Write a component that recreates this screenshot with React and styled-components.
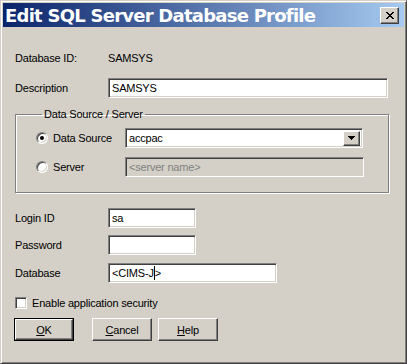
import { createGlobalStyle, styled } from "styled-components";

const GlobalStyle = createGlobalStyle`
  html, body {
    margin: 0;
    padding: 0;
    background: #d4d0c8;
  }
  * {
    box-sizing: border-box;
  }
`;

const Window = styled.div`
  width: 407px;
  height: 364px;
  background: #d4d0c8;
  border: 1px solid;
  border-color: #d4d0c8 #404040 #404040 #d4d0c8;
  box-shadow: inset 1px 1px #fff, inset -1px -1px #808080;
  padding: 2px;
  display: flex;
  flex-direction: column;
  font-family: "Liberation Sans", Arial, sans-serif;
  font-size: 11px;
  letter-spacing: -0.2px;
  color: #000;
`;

const TitleBar = styled.div`
  height: 24px;
  display: flex;
  align-items: center;
  justify-content: space-between;
  padding: 0 5px 0 2px;
  background: linear-gradient(to right, #0a246a, #a6caf0);
`;

const TitleText = styled.span`
  font-family: "DejaVu Sans", Verdana, sans-serif;
  font-weight: bold;
  font-size: 18px;
  letter-spacing: -0.75px;
  color: #fff;
  white-space: nowrap;
`;

const raised = `
  background: #d4d0c8;
  border: 1px solid;
  border-color: #fff #404040 #404040 #fff;
  box-shadow: inset -1px -1px #808080, inset 1px 1px #d4d0c8;
`;

const sunken = `
  border: 1px solid;
  border-color: #808080 #fff #fff #808080;
  box-shadow: inset 1px 1px #404040, inset -1px -1px #d4d0c8;
`;

const CloseButton = styled.div`
  ${raised}
  width: 19px;
  height: 17px;
  display: grid;
  place-items: center;
`;

const Body = styled.div`
  display: flex;
  flex-direction: column;
  padding: 21px 15px 0 12px;
`;

const Row = styled.div`
  display: grid;
  grid-template-columns: ${(p) => p.$label || 93}px auto;
  align-items: center;
  height: ${(p) => p.$h || 20}px;
  margin-top: ${(p) => p.$mt || 0}px;
`;

const Label = styled.span`
  white-space: nowrap;
`;

const TextBox = styled.div`
  ${sunken}
  width: ${(p) => p.$w}px;
  height: ${(p) => p.$h || 20}px;
  background: ${(p) => (p.$disabled ? "#d4d0c8" : "#fff")};
  color: ${(p) => (p.$disabled ? "#808080" : "#000")};
  display: flex;
  align-items: center;
  padding: 0 3px;
  white-space: nowrap;
`;

const Caret = styled.span`
  display: inline-block;
  width: 1px;
  height: 14px;
  background: #000;
`;

const Combo = styled(TextBox)`
  justify-content: space-between;
  padding: 0 2px 0 3px;
`;

const DropButton = styled.div`
  ${raised}
  width: 17px;
  height: 15px;
  display: grid;
  place-items: center;
`;

const GroupBox = styled.fieldset`
  margin: 10px 0 0;
  padding: 7px 0 15px 20px;
  min-width: 0;
  width: 374px;
  border: 1px solid #808080;
  box-shadow: inset 1px 1px #fff, 1px 1px #fff;
`;

const Legend = styled.legend`
  padding: 0 2px;
  margin-left: 6px;
  line-height: 13px;
`;

const OptionLabel = styled.label`
  display: flex;
  align-items: center;
  gap: 5px;
  white-space: nowrap;
`;

const Radio = styled.span`
  ${sunken}
  width: 12px;
  height: 12px;
  border-radius: 50%;
  background: #fff;
  display: grid;
  place-items: center;

  &::after {
    content: "";
    width: 4px;
    height: 4px;
    border-radius: 50%;
    background: ${(p) => (p.$checked ? "#000" : "transparent")};
  }
`;

const CheckRow = styled.label`
  display: flex;
  align-items: center;
  gap: 5px;
  height: 13px;
  margin-top: 13px;
`;

const CheckBox = styled.span`
  ${sunken}
  width: 12px;
  height: 12px;
  background: #fff;
`;

const ButtonRow = styled.div`
  display: flex;
  margin: 9px 0 0 -1px;
`;

const Button = styled.div`
  ${raised}
  width: ${(p) => (p.$default ? 58 : 60)}px;
  height: ${(p) => (p.$default ? 21 : 23)}px;
  display: grid;
  place-items: center;
  margin-left: ${(p) => p.$ml || 0}px;
`;

const DefaultFrame = styled.div`
  border: 1px solid #000;
  width: 60px;
  height: 23px;
`;

const Key = styled.span`
  text-decoration: underline;
`;

export default function App() {
  return (
    <>
      <GlobalStyle />
      <Window>
        <TitleBar>
          <TitleText>Edit SQL Server Database Profile</TitleText>
          <CloseButton>
            <svg width="8" height="7" viewBox="0 0 8 7" shapeRendering="crispEdges">
              <path
                d="M0 0h2v1h-2zM6 0h2v1h-2zM1 1h2v1h-2zM5 1h2v1h-2zM2 2h4v1h-4zM3 3h2v1h-2zM2 4h4v1h-4zM1 5h2v1h-2zM5 5h2v1h-2zM0 6h2v1h-2zM6 6h2v1h-2z"
                fill="#000"
              />
            </svg>
          </CloseButton>
        </TitleBar>
        <Body>
          <Row>
            <Label>Database ID:</Label>
            <Label>SAMSYS</Label>
          </Row>
          <Row $mt={10}>
            <Label>Description</Label>
            <TextBox $w={280}>SAMSYS</TextBox>
          </Row>

          <GroupBox>
            <Legend>Data Source / Server</Legend>
            <Row $label={89}>
              <OptionLabel>
                <Radio $checked />
                Data Source
              </OptionLabel>
              <Combo $w={238}>
                accpac
                <DropButton>
                  <svg width="7" height="4" viewBox="0 0 7 4" shapeRendering="crispEdges">
                    <path d="M0 0h7v1h-1v1h-1v1h-1v1h-1v-1h-1v-1h-1v-1h-1z" fill="#000" />
                  </svg>
                </DropButton>
              </Combo>
            </Row>
            <Row $label={89} $mt={9}>
              <OptionLabel>
                <Radio />
                Server
              </OptionLabel>
              <TextBox $w={239} $disabled>
                &lt;server name&gt;
              </TextBox>
            </Row>
          </GroupBox>

          <Row $mt={15}>
            <Label>Login ID</Label>
            <TextBox $w={88}>sa</TextBox>
          </Row>
          <Row $mt={7}>
            <Label>Password</Label>
            <TextBox $w={88} />
          </Row>
          <Row $mt={8}>
            <Label>Database</Label>
            <TextBox $w={169}>
              &lt;CIMS-J
              <Caret />
              &gt;
            </TextBox>
          </Row>

          <CheckRow>
            <CheckBox />
            Enable application security
          </CheckRow>

          <ButtonRow>
            <DefaultFrame>
              <Button $default>
                <span>
                  <Key>O</Key>K
                </span>
              </Button>
            </DefaultFrame>
            <Button $ml={18}>
              <span>
                <Key>C</Key>ancel
              </span>
            </Button>
            <Button $ml={6}>
              <span>
                <Key>H</Key>elp
              </span>
            </Button>
          </ButtonRow>
        </Body>
      </Window>
    </>
  );
}
